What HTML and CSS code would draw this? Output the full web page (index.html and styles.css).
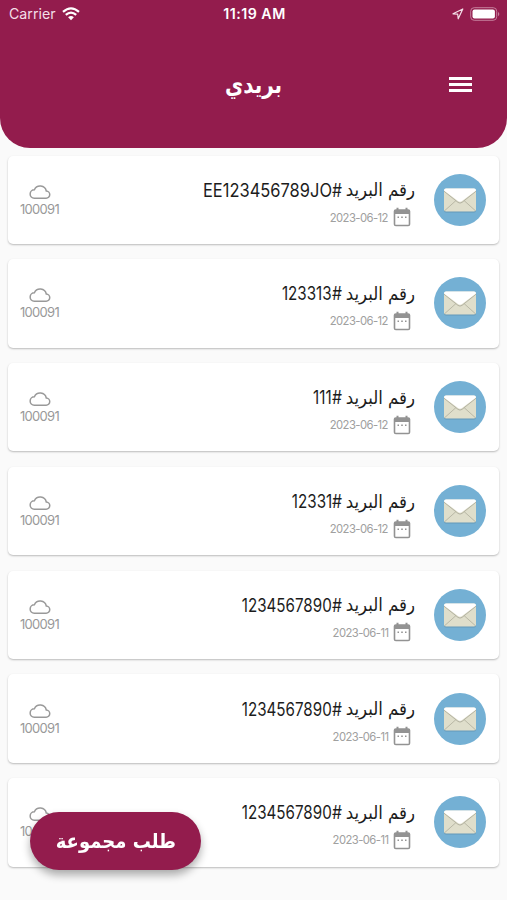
FILE: index.html
```html
<!DOCTYPE html>
<html lang="ar" dir="rtl">
<head>
    <meta charset="UTF-8">
    <meta name="viewport" content="width=device-width, initial-scale=1.0">
    <title>بريدي</title>
    <link rel="stylesheet" href="styles.css">
</head>
<body>
    <svg class="sprite" xmlns="http://www.w3.org/2000/svg">
        <symbol id="mail" viewBox="0 0 52 52">
            <circle cx="26" cy="26" r="26" fill="#74b0d4"/>
            <rect x="10" y="16" width="32" height="22.500" rx="2" fill="#4f7f9e" opacity=".5"/>
            <rect x="10" y="14.5" width="32" height="23" rx="2" fill="#dfdecb"/>
            <path d="M10.500 36.800L22 26.500M41.500 36.800L30 26.500" stroke="#b9b8a6" fill="none"/>
            <path d="M10 17.200L24 28.400Q26 29.800 28 28.400L42 17.200" stroke="#b4b3a2" fill="none"/>
            <path d="M12 14.500H40Q42 14.500 42 16.500L28 27Q26 28.600 24 27L10 16.500Q10 14.500 12 14.500Z" fill="#fff"/>
        </symbol>
        <symbol id="calendar" viewBox="0 0 18 20">
            <path d="M4.500 .8V4M13.500 .8V4" stroke="#939393" stroke-width="2"/>
            <rect x="1.500" y="3" width="15" height="15.500" rx="1.300" fill="none" stroke="#939393" stroke-width="1.600"/>
            <path d="M1.500 3H16.500V7H1.500Z" fill="#939393"/>
            <path d="M4.500 10.300H6M8.200 10.300H9.800M12 10.300H13.500" stroke="#939393" stroke-width="1.500"/>
        </symbol>
        <symbol id="cloud" viewBox="0 0 22 16">
            <path d="M5.300 14.200H17A3.600 3.600 0 0 0 17.300 7A6.300 6.300 0 0 0 5.400 5.800A4.200 4.200 0 0 0 5.300 14.200Z" fill="none" stroke="#999" stroke-width="1.500"/>
        </symbol>
    </svg>

    <header class="header">
        <div class="status-bar" dir="ltr">
            <div class="carrier">
                <span>Carrier</span>
                <svg width="18" height="14" viewBox="0 0 18 14">
                    <path d="M1 4.800Q9-2.200 17 4.800M3.800 7.900Q9 3.200 14.200 7.900" fill="none" stroke="#fff" stroke-width="2.200"/>
                    <path d="M6.100 10.300Q9 7.800 11.900 10.300L9 13.300Z" fill="#fff"/>
                </svg>
            </div>
            <div class="clock">11:19 AM</div>
            <div class="battery">
                <svg width="12" height="12" viewBox="0 0 12 12">
                    <path d="M1 5.800L10.800 1L6.200 10.800L5.700 6.200Z" fill="none" stroke="#f3dfe8" stroke-width="1.200" stroke-linejoin="round"/>
                </svg>
                <svg width="30" height="14" viewBox="0 0 30 14">
                    <rect x=".7" y=".7" width="26" height="12.600" rx="3.500" fill="none" stroke="#c57f9c"/>
                    <rect x="2.500" y="2.500" width="22.400" height="9" rx="2" fill="#fff"/>
                    <path d="M28 4.700Q30.600 7 28 9.300Z" fill="#c57f9c"/>
                </svg>
            </div>
        </div>
        <div class="toolbar">
            <button class="menu-button" aria-label="القائمة"><i></i><i></i><i></i></button>
            <h1>بريدي</h1>
        </div>
    </header>

    <main class="list" id="list"></main>

    <button class="order-button"><span>طلب مجموعة</span></button>

    <script>
        const items = [
            { number: 'EE123456789JO', date: '2023-06-12' },
            { number: '123313', date: '2023-06-12' },
            { number: '111', date: '2023-06-12' },
            { number: '12331', date: '2023-06-12' },
            { number: '1234567890', date: '2023-06-11' },
            { number: '1234567890', date: '2023-06-11' },
            { number: '1234567890', date: '2023-06-11' }
        ];

        document.getElementById('list').innerHTML = items.map(item => `
            <article class="card">
                <svg class="mail-icon"><use href="#mail"/></svg>
                <div class="info">
                    <div class="name"><span class="label">رقم البريد</span><span class="hash">#</span><span class="number ${/[A-Z]/.test(item.number) ? 'coded' : ''}">${item.number}</span></div>
                    <div class="date"><svg class="calendar-icon"><use href="#calendar"/></svg><span>${item.date}</span></div>
                </div>
                <div class="office">
                    <svg class="cloud-icon"><use href="#cloud"/></svg>
                    <span>100091</span>
                </div>
            </article>`).join('');
    </script>
</body>
</html>
```
FILE: styles.css
```css
* {
    box-sizing: border-box;
}

body {
    margin: 0;
    height: 900px;
    overflow: hidden;
    background-color: #fafafa;
    color: #1c1c1c;
    font-family: Inter, 'DejaVu Sans', sans-serif;
}

button {
    border: none;
    padding: 0;
    font-family: inherit;
    cursor: pointer;
}

.sprite {
    display: none;
}

.header {
    height: 147.5px;
    background-color: #931c4d;
    border-radius: 0 0 30px 30px;
    color: #fff;
}

.status-bar {
    display: grid;
    grid-template-columns: 1fr auto 1fr;
    align-items: center;
    height: 27px;
    padding: 0 7px 0 9px;
    font-size: 14.2px;
}

.carrier, .battery {
    display: flex;
    align-items: center;
    gap: 6px;
    color: #f3dfe8;
}

.battery {
    justify-content: flex-end;
}

.clock {
    font-weight: 600;
    letter-spacing: 0.5px;
}

.toolbar {
    display: grid;
    grid-template-columns: 60px 1fr 60px;
    align-items: center;
    height: 115px;
    padding: 0 16px;
}

.menu-button {
    display: grid;
    gap: 3.5px;
    width: 23px;
    margin-right: 19px;
    background: none;
}

.menu-button i {
    height: 2.6px;
    background-color: #fff;
}

h1 {
    margin: 1px 0 0;
    text-align: center;
    font-family: 'DejaVu Sans', sans-serif;
    font-size: 24px;
    transform: scaleX(0.83);
}

.list {
    display: flex;
    flex-direction: column;
    gap: 15.4px;
    padding: 8px 8px 0;
}

.card {
    display: flex;
    align-items: center;
    height: 88.4px;
    padding: 0 13px;
    background-color: #fff;
    border-radius: 5px;
    box-shadow: 0 1px 2px rgba(0, 0, 0, 0.26);
}

.mail-icon {
    width: 52px;
    height: 52px;
}

.info {
    flex: 1;
    margin-right: 19px;
    padding-top: 9px;
}

.name {
    display: flex;
    align-items: center;
    height: 26px;
    font-size: 18.5px;
}

.label {
    width: 73px;
    font-family: 'DejaVu Sans', sans-serif;
    font-size: 18px;
    white-space: nowrap;
    transform: scaleX(0.92);
    transform-origin: right;
}

.hash {
    width: 10px;
    transform: scaleX(0.85);
    transform-origin: right;
}

.number {
    transform: scaleX(0.82);
    transform-origin: right;
}

.number.coded {
    transform: scaleX(0.89);
}

.date {
    display: flex;
    align-items: center;
    gap: 5px;
    margin-right: 4px;
    height: 29px;
    color: #a0a0a0;
    font-size: 12px;
}

.date span {
    letter-spacing: -0.6px;
    transform: scaleX(0.94);
    transform-origin: right;
}

.calendar-icon {
    width: 18px;
    height: 20px;
}

.office {
    display: flex;
    flex-direction: column;
    align-items: center;
    width: 39px;
    margin-left: -1px;
    padding-top: 2px;
    color: #999;
    font-size: 13px;
    line-height: 18px;
    letter-spacing: -0.7px;
}

.cloud-icon {
    width: 22px;
    height: 16px;
}

.order-button {
    position: fixed;
    left: 30px;
    top: 812px;
    width: 171px;
    height: 58px;
    border-radius: 29px;
    background-color: #931c4d;
    color: #fff;
    font-family: 'DejaVu Sans', sans-serif;
    font-size: 20px;
    font-weight: bold;
    box-shadow: 0 5px 8px rgba(0, 0, 0, 0.32);
}

.order-button span {
    display: inline-block;
    white-space: nowrap;
    transform: scaleX(0.9);
}
```
